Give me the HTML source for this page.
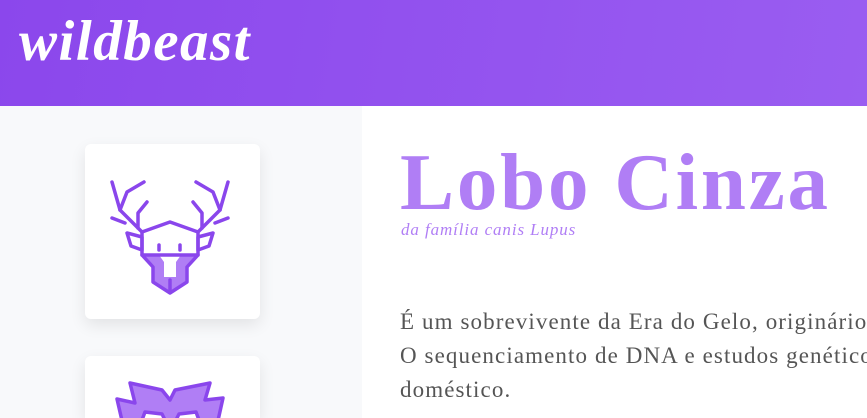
<!DOCTYPE html>
<html><head><meta charset="utf-8"><style>
*{margin:0;padding:0;box-sizing:border-box}
html,body{width:867px;height:418px;overflow:hidden}
body{background:#fff;position:relative;font-family:"Liberation Serif",serif}
.hdr{position:absolute;left:0;top:0;width:867px;height:106px;background:linear-gradient(100deg,#8b47ec 0%,#9a5df1 100%)}
.logo{position:absolute;left:19px;top:9px;font-style:italic;font-weight:bold;color:#fff;font-size:57px;letter-spacing:1.5px}
.side{position:absolute;left:0;top:106px;width:362px;height:312px;background:#f8f9fb}
.card{position:absolute;left:85px;width:175px;height:175px;background:#fff;border-radius:6px;box-shadow:0 6px 16px rgba(0,0,0,0.09)}
h1{position:absolute;left:400px;top:136px;font-size:81px;font-weight:bold;color:#b07ef5;white-space:nowrap;letter-spacing:2.8px}
.sub{position:absolute;left:401px;top:220px;font-size:17px;font-style:italic;color:#b07ef5;white-space:nowrap;letter-spacing:0.9px}
p{position:absolute;left:400px;top:305px;font-size:23px;line-height:34px;color:#555;white-space:nowrap;letter-spacing:1.1px}
svg{position:absolute;left:0;top:0}
</style></head><body>
<div class="hdr"><div class="logo">wildbeast</div></div>
<div class="side"></div>
<div class="card" style="top:144px"></div>
<div class="card" style="top:356px;height:62px;border-bottom-left-radius:0;border-bottom-right-radius:0"></div>
<svg width="867" height="418" fill="none" stroke="#8a46ec" stroke-width="3.5" stroke-linecap="round" stroke-linejoin="round">
<polygon points="142,255 198,255 187,267 187,282 170,293 153,282 153,267" fill="#b07ef5" stroke="none"/>
<polygon points="159,255 181,255 176,262 176,277 164,277 164,262" fill="#fff" stroke="none"/>
<g>
<polyline points="112,182 120,210 142,232"/>
<polyline points="120,210 127,192 144,182"/>
<polyline points="112,218 125,223"/>
<polyline points="147,202 138,213 138,228"/>
<polygon points="127,233 142,237 142,250 131,246"/>
</g>
<g transform="translate(340,0) scale(-1,1)">
<polyline points="112,182 120,210 142,232"/>
<polyline points="120,210 127,192 144,182"/>
<polyline points="112,218 125,223"/>
<polyline points="147,202 138,213 138,228"/>
<polygon points="127,233 142,237 142,250 131,246"/>
</g>
<polygon points="142,232 170,222 198,232 198,255 187,267 187,282 170,293 153,282 153,267 142,255"/>
<line x1="142" y1="255" x2="198" y2="255"/>
<line x1="170" y1="280" x2="170" y2="292"/>
<line x1="159" y1="245" x2="159" y2="250"/>
<line x1="180" y1="245" x2="180" y2="250"/>
<polygon points="123,425 117,399 135,403 130,383 162,390 170,400 175,390 210,383 205,400 223,398 217,425" fill="#b07ef5"/>
<path d="M142,420 L145,412 L162,414 L165,420 M176,420 L179,414 L196,412 L199,420" fill="#fff"/>
</svg>
<h1>Lobo Cinza</h1>
<div class="sub">da família canis Lupus</div>
<p>É um sobrevivente da Era do Gelo, originário<br>O sequenciamento de DNA e estudos genéticos<br>doméstico.</p>
</body></html>
